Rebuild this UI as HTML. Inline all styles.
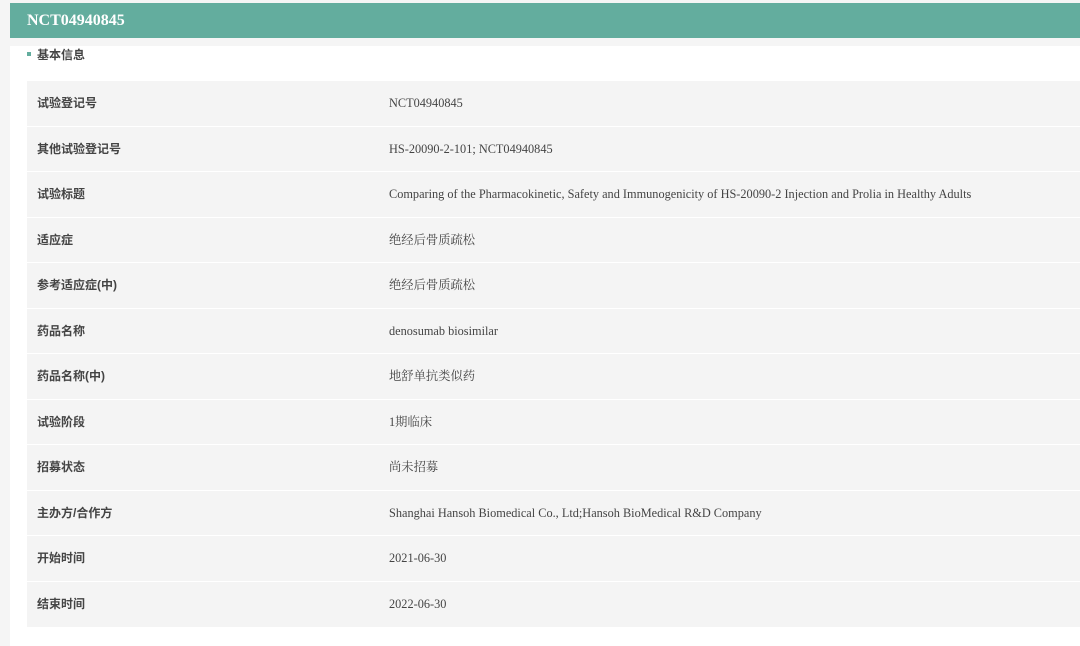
<!DOCTYPE html>
<html><head><meta charset="utf-8"><style>
body{margin:0;width:1080px;height:623px;overflow:hidden;background:#f5f5f5;font-family:"Liberation Serif","Noto Serif CJK SC",serif;}
.hd{position:absolute;left:10px;top:3px;width:1070px;height:35px;background:#63ad9e;color:#fff;font-weight:bold;font-size:16px;line-height:35px;box-sizing:border-box;padding-left:17px;}
.wrap{position:absolute;left:10px;top:46px;width:1070px;height:600px;background:#fff;}
.sec{position:absolute;left:17px;top:0;font-family:"Liberation Sans","Noto Sans CJK SC",sans-serif;font-weight:bold;font-size:12px;color:#444;line-height:18px;}
.sec i{display:inline-block;width:4px;height:4px;background:#63ad9e;margin-right:6px;vertical-align:3px;}
.rows{position:absolute;left:17px;top:35px;width:1053px;}
.r{height:45.55px;box-sizing:border-box;background:#f4f4f4;border-bottom:1.7px solid #fff;position:relative;font-size:12px;line-height:44px;color:#333;}
.l{position:absolute;left:10px;font-family:"Liberation Sans","Noto Sans CJK SC",sans-serif;font-weight:bold;color:#444;}
.v{position:absolute;left:362px;color:#444;font-size:12.3px;}
</style></head><body>
<div class="hd">NCT04940845</div>
<div class="wrap">
<div class="sec"><i></i>基本信息</div>
<div class="rows">
<div class="r"><span class="l">试验登记号</span><span class="v">NCT04940845</span></div>
<div class="r"><span class="l">其他试验登记号</span><span class="v">HS-20090-2-101; NCT04940845</span></div>
<div class="r"><span class="l">试验标题</span><span class="v">Comparing of the Pharmacokinetic, Safety and Immunogenicity of HS-20090-2 Injection and Prolia in Healthy Adults</span></div>
<div class="r"><span class="l">适应症</span><span class="v">绝经后骨质疏松</span></div>
<div class="r"><span class="l">参考适应症(中)</span><span class="v">绝经后骨质疏松</span></div>
<div class="r"><span class="l">药品名称</span><span class="v">denosumab biosimilar</span></div>
<div class="r"><span class="l">药品名称(中)</span><span class="v">地舒单抗类似药</span></div>
<div class="r"><span class="l">试验阶段</span><span class="v">1期临床</span></div>
<div class="r"><span class="l">招募状态</span><span class="v">尚未招募</span></div>
<div class="r"><span class="l">主办方/合作方</span><span class="v">Shanghai Hansoh Biomedical Co., Ltd;Hansoh BioMedical R&amp;D Company</span></div>
<div class="r"><span class="l">开始时间</span><span class="v">2021-06-30</span></div>
<div class="r"><span class="l">结束时间</span><span class="v">2022-06-30</span></div>
</div></div>
</body></html>
